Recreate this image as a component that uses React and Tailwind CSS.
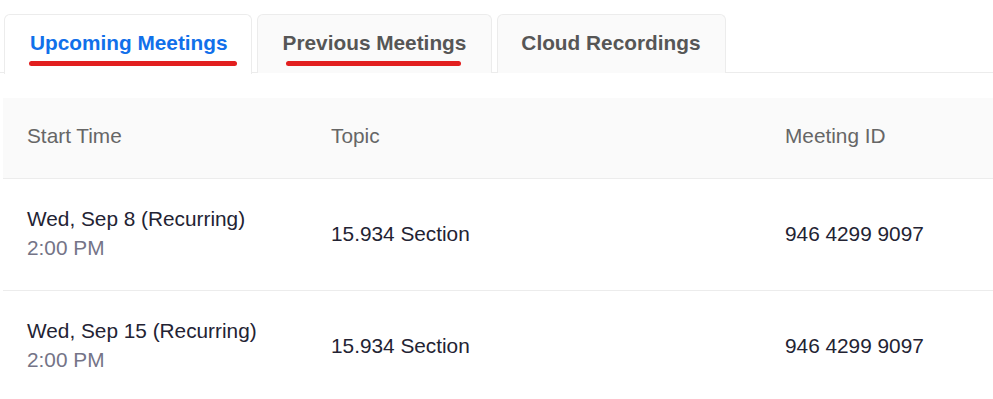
import React from "react";

const tabs = [
  { label: "Upcoming Meetings", active: true, marked: true, pad: "pl-[25px] pr-[23px]", line: "left-[24px] right-[14px]" },
  { label: "Previous Meetings", active: false, marked: true, pad: "pl-[25px] pr-[25px]", line: "left-[28px] right-[30px]" },
  { label: "Cloud Recordings", active: false, marked: false, pad: "pl-[23px] pr-[25px]", line: "" },
];

const meetings = [
  { day: "Wed, Sep 8 (Recurring)", time: "2:00 PM", topic: "15.934 Section", id: "946 4299 9097" },
  { day: "Wed, Sep 15 (Recurring)", time: "2:00 PM", topic: "15.934 Section", id: "946 4299 9097" },
];

export default function App() {
  return (
    <div
      className="w-[993px] h-[399px] overflow-hidden bg-white"
      style={{ fontFamily: '"Liberation Sans", Arial, sans-serif' }}
    >
      {/* Tabs */}
      <div className="flex gap-[5px] pt-[14px] pl-[4px] border-b border-[#ececec] h-[73px]">
        {tabs.map((tab) => (
          <div
            key={tab.label}
            className={
              "relative flex flex-col items-center h-[59px] rounded-t-[6px] border border-b-0 border-[#ececec] " +
              tab.pad +
              (tab.active ? " bg-white -mb-px h-[60px]" : " bg-[#fafafa]")
            }
          >
            <span
              className={
                "mt-[17px] text-[20.8px] leading-[22px] font-bold " +
                (tab.active ? "text-[#1170ea]" : "text-[#565656]")
              }
            >
              {tab.label}
            </span>
            {tab.marked && (
              <span className={"absolute top-[46px] h-[5px] rounded-full bg-[#e21f1f] " + tab.line} />
            )}
          </div>
        ))}
      </div>

      {/* Table */}
      <div className="mt-[25px] ml-[3px]">
        <div className="grid grid-cols-[304px_454px_1fr] items-center h-[81px] pb-[4px] bg-[#fafafa] border-b border-[#ececec] text-[20.8px] text-[#666666]">
          <div className="pl-[24px]">Start Time</div>
          <div className="pl-[24px]">Topic</div>
          <div className="pl-[24px]">Meeting ID</div>
        </div>

        {meetings.map((m) => (
          <div
            key={m.day}
            className="grid grid-cols-[304px_454px_1fr] items-center h-[112px] border-b border-[#ececec] text-[20.8px] text-[#232333]"
          >
            <div className="pl-[24px] flex flex-col leading-[29px] -mt-[3px]">
              <span>{m.day}</span>
              <span className="text-[#747487]">{m.time}</span>
            </div>
            <div className="pl-[24px] -mt-[2px]">{m.topic}</div>
            <div className="pl-[24px] -mt-[2px]">{m.id}</div>
          </div>
        ))}
      </div>
    </div>
  );
}
